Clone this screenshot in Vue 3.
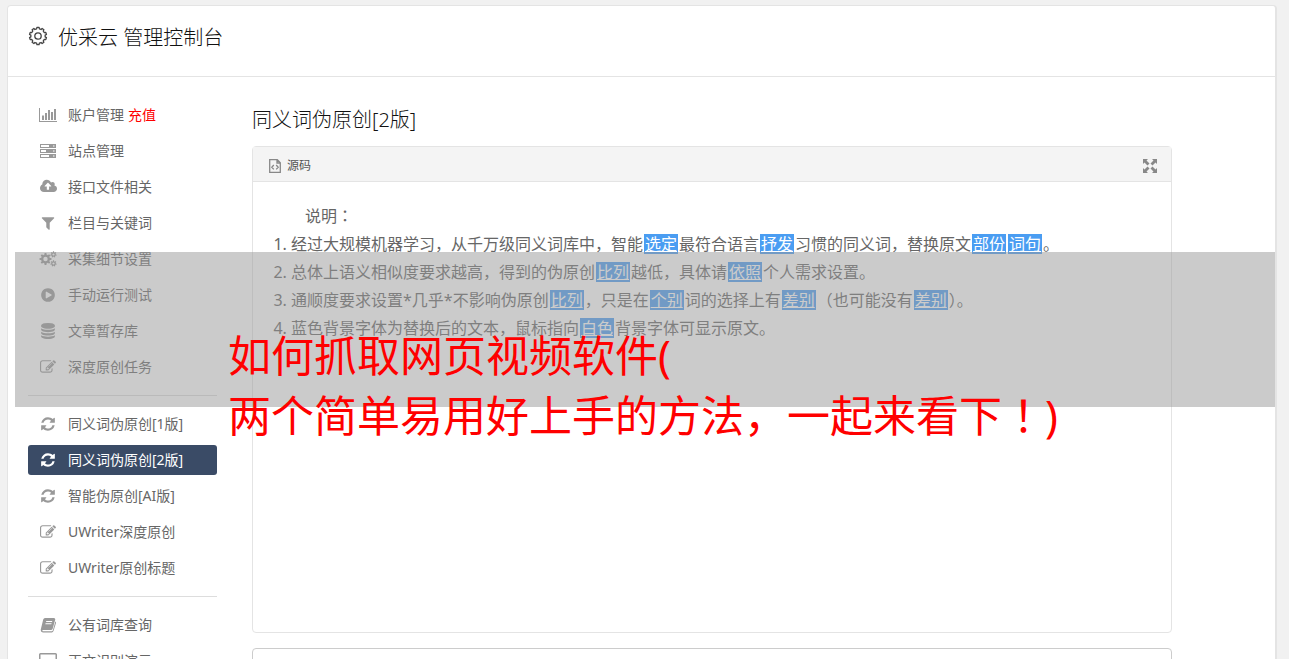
<script setup>
import { h } from 'vue'

const icons = {
  chart: { box: '0 0 18 16', w: 18, d: 'M0 1h1v13h17v1H0zM3 8.500h2V13H3zM6 6h2v7H6zM9 3h2v10H9zM12 5h2v8h-2zM15 2h2v11h-2z' },
  server: { box: '0 0 18 16', w: 18, d: 'M1 1h16v4H1zM2 2v2h8V2zM1 6h16v4H1zM2 7v2h5V7zM1 11h16v4H1zM2 12v2h8v-2zM14 2.500v1h1.500v-1zM14 7.500v1h1.500v-1zM14 12.500v1h1.500v-1z' },
  cloud: { box: '0 64 1920 1792', w: 17, d: 'M1280 864q0-14-9-23l-352-352q-9-9-23-9t-23 9l-351 351q-10 12-10 24 0 14 9 23t23 9h224v352q0 13 9.500 22.500t22.500 9.500h192q13 0 22.500-9.500t9.500-22.500v-352h224q13 0 22.500-9.500t9.500-22.500zm640 288q0 159-112.500 271.500t-271.500 112.500h-1088q-185 0-316.500-131.500t-131.500-316.500q0-130 70-240t188-165q-2-30-2-43 0-212 150-362t362-150q156 0 285.500 87t188.500 231q71-62 166-62 106 0 181 75t75 181q0 76-41 138 130 31 213.500 135.500t83.500 238.500z' },
  filter: { box: '0 0 1792 1792', w: 16, d: 'M1595 295q17 41-14 70l-493 493v742q0 42-39 59-13 5-25 5-27 0-45-19l-256-256q-19-19-19-45v-486l-493-493q-31-29-14-70 17-39 59-39h1280q42 0 59 39z' },
  play: { box: '0 0 1792 1792', w: 16, d: 'M896 128q209 0 385.500 103t279.500 279.500 103 385.500-103 385.500-279.500 279.500-385.500 103-385.500-103-279.500-279.500-103-385.500 103-385.500 279.500-279.500 385.500-103zm384 823q32-18 32-55t-32-55l-544-320q-31-19-64-1-32 19-32 56v640q0 37 32 56 16 8 32 8 17 0 32-9z' },
  database: { box: '0 0 1792 1792', w: 16, d: 'M896 768q237 0 443-43t325-127v170q0 69-103 128t-280 93.500-385 34.500-385-34.500-280-93.500-103-128v-170q119 84 325 127t443 43zm0 768q237 0 443-43t325-127v170q0 69-103 128t-280 93.500-385 34.500-385-34.500-280-93.500-103-128v-170q119 84 325 127t443 43zm0-384q237 0 443-43t325-127v170q0 69-103 128t-280 93.500-385 34.500-385-34.500-280-93.500-103-128v-170q119 84 325 127t443 43zm0-1152q208 0 385 34.500t280 93.500 103 128v128q0 69-103 128t-280 93.500-385 34.500-385-34.500-280-93.500-103-128v-128q0-69 103-128t280-93.500 385-34.500z' },
  edit: { box: '0 0 1792 1792', w: 16, d: 'M888 1184l116-116-152-152-116 116v56h96v96h56zm440-720q-16-16-33 1l-350 350q-17 17-1 33t33-1l350-350q17-17 1-33zm80 594v190q0 119-84.500 203.500t-203.500 84.500h-832q-119 0-203.500-84.500t-84.500-203.500v-832q0-119 84.500-203.500t203.500-84.500h832q63 0 117 25 15 7 18 23 3 17-9 29l-49 49q-14 14-32 8-23-6-45-6h-832q-66 0-113 47t-47 113v832q0 66 47 113t113 47h832q66 0 113-47t47-113v-126q0-13 9-22l64-64q15-15 35-7t20 29zm-96-738l288 288-672 672h-288v-288zm444 132l-92 92-288-288 92-92q28-28 68-28t68 28l152 152q28 28 28 68t-28 68z' },
  refresh: { box: '-128 -128 1792 1792', w: 16, d: 'M1511 928q0 5-1 7-64 268-268 434.500t-478 166.500q-146 0-282.500-55t-243.500-157l-129 129q-19 19-45 19t-45-19-19-45v-448q0-26 19-45t45-19h448q26 0 45 19t19 45-19 45l-137 137q71 66 161 102t187 36q134 0 250-65t186-179q11-17 53-117 8-23 30-23h192q13 0 22.500 9.500t9.500 22.500zm25-800v448q0 26-19 45t-45 19h-448q-26 0-45-19t-19-45 19-45l138-138q-148-137-349-137-134 0-250 65t-186 179q-11 17-53 117-8 23-30 23h-199q-13 0-22.500-9.500t-9.500-22.500v-7q65-268 270-434.500t480-166.500q146 0 284 55.500t245 156.500l130-129q19-19 45-19t45 19 19 45z' },
  book: { box: '0 0 16 16', w: 16, d: 'M5 1h9q1.500.2 1.200 1.700L12.600 12q-.4 1-1.600 1H3q-1 0-.7.7.2.6 1 .6h8.500q.7 0 1-.8L15.400 4.500q1 .5.600 1.500L13.500 14q-.5 1.400-1.700 1.400H3q-2.400-.3-2.300-2.600L3.200 2.600Q3.700 1.100 5 1zM6.300 4l-.3 1h6l.3-1zM5.600 6.300l-.3 1h6l.3-1z' },
  desktop: { box: '0 0 18 16', w: 18, d: 'M1.500 0h15Q18 0 18 1.500v10q0 1.500-1.500 1.500H12l.5 2H14v1H4v-1h1.500L6 13H1.500Q0 13 0 11.500v-10Q0 0 1.500 0zM1.500 1.500v8h15v-8z' }
}

// Closed toothed outline around a centre point
function gear(cx, cy, outer, inner, teeth) {
  const points = []
  for (let i = 0; i < teeth; i++) {
    for (const [offset, radius] of [[-0.3, inner], [-0.2, outer], [0.2, outer], [0.3, inner]]) {
      const a = ((i + offset) / teeth) * Math.PI * 2 - Math.PI / 2
      points.push(`${(cx + radius * Math.cos(a)).toFixed(2)} ${(cy + radius * Math.sin(a)).toFixed(2)}`)
    }
  }
  return 'M' + points.join('L') + 'Z'
}
function hole(cx, cy, r) {
  return `M${cx - r} ${cy}a${r} ${r} 0 1 0 ${2 * r} 0a${r} ${r} 0 1 0 ${-2 * r} 0Z`
}
icons.cogs = {
  box: '0 0 18 16', w: 18,
  d: gear(6.5, 8, 6, 4.5, 8) + hole(6.5, 8, 2.2) + gear(14.5, 3.5, 3.2, 2.3, 7) + hole(14.5, 3.5, 1.1) + gear(14.5, 12.5, 3.2, 2.3, 7) + hole(14.5, 12.5, 1.1)
}
const titleGear = gear(10, 10, 8.6, 7.2, 10)

// Text whose colons and exclamation marks sit in the middle of their cell
const Prose = ({ text }) =>
  text.split(/([：！])/).map((part) => (/^[：！]$/.test(part) ? h('span', { class: 'mid-mark', lang: 'zh-TW' }, part) : part))
Prose.props = ['text']

const groups = [
  [
    { icon: 'chart', text: '账户管理', extra: '充值' },
    { icon: 'server', text: '站点管理' },
    { icon: 'cloud', text: '接口文件相关' },
    { icon: 'filter', text: '栏目与关键词' },
    { icon: 'cogs', text: '采集细节设置' },
    { icon: 'play', text: '手动运行测试' },
    { icon: 'database', text: '文章暂存库' },
    { icon: 'edit', text: '深度原创任务' }
  ],
  [
    { icon: 'refresh', text: '同义词伪原创[1版]' },
    { icon: 'refresh', text: '同义词伪原创[2版]', active: true },
    { icon: 'refresh', text: '智能伪原创[AI版]' },
    { icon: 'edit', text: 'UWriter深度原创' },
    { icon: 'edit', text: 'UWriter原创标题' }
  ],
  [
    { icon: 'book', text: '公有词库查询' },
    { icon: 'desktop', text: '正文识别演示' }
  ]
]

// Odd entries of each line are the replaced words
const notes = [
  ['经过大规模机器学习，从千万级同义词库中，智能', '选定', '最符合语言', '抒发', '习惯的同义词，替换原文', '部份', '', '词句', '。'],
  ['总体上语义相似度要求越高，得到的伪原创', '比列', '越低，具体请', '依照', '个人需求设置。'],
  ['通顺度要求设置*几乎*不影响伪原创', '比列', '，只是在', '个别', '词的选择上有', '差别', '（也可能没有', '差别', '）。'],
  ['蓝色背景字体为替换后的文本，鼠标指向', '白色', '背景字体可显示原文。']
]
</script>

<template>
  <div class="page">
    <div class="card">
      <header class="top">
        <svg class="gear" viewBox="0 0 20 20" aria-hidden="true">
          <path :d="titleGear" /><circle cx="10" cy="10" r="3.200" />
        </svg>
        <h1>优采云 管理控制台</h1>
      </header>
      <div class="body">
        <nav class="side">
          <ul v-for="(group, g) in groups" :key="g">
            <li v-for="item in group" :key="item.text">
              <a href="#" :class="{ active: item.active }">
                <span class="ico">
                  <svg :viewBox="icons[item.icon].box" :width="icons[item.icon].w" height="16" aria-hidden="true">
                    <path :d="icons[item.icon].d" fill-rule="evenodd" />
                  </svg>
                </span>
                <span>{{ item.text }}</span>
                <em v-if="item.extra">{{ item.extra }}</em>
              </a>
            </li>
          </ul>
        </nav>
        <main>
          <h2>同义词伪原创[2版]</h2>
          <section class="editor">
            <div class="bar">
              <button type="button">
                <svg width="12" height="14" viewBox="0 0 12 14" aria-hidden="true">
                  <path d="M.7.700h7.600l3 3v9.600H.7zM8 .700v3.300h3.300M4.800 6L2.800 8.200l2 2.200M7.200 6l2 2.200-2 2.200" />
                </svg>
                源码
              </button>
              <button type="button" aria-label="全屏">
                <svg class="solid" width="14" height="14" viewBox="0 0 14 14" aria-hidden="true">
                  <path d="M0 0h5L3.500 1.500l3 3-2 2-3-3L0 5zM14 0H9l1.500 1.500-3 3 2 2 3-3L14 5zM0 14h5l-1.500-1.500 3-3-2-2-3 3L0 9zM14 14H9l1.500-1.500-3-3 2-2 3 3L14 9z" />
                </svg>
              </button>
            </div>
            <div class="text">
              <p><Prose text="说明：" /></p>
              <ol>
                <li v-for="(note, n) in notes" :key="n">
                  <template v-for="(part, i) in note" :key="i"><u v-if="i % 2">{{ part }}</u><template v-else>{{ part }}</template></template>
                </li>
              </ol>
            </div>
          </section>
          <section class="result"></section>
        </main>
      </div>
    </div>
    <div class="band"></div>
    <div class="caption">如何抓取网页视频软件(<br><Prose text="两个简单易用好上手的方法，一起来看下！)" /></div>
  </div>
</template>

<style>
body { background: #f1f1f1; }
.mid-mark { font-family: "Noto Sans CJK TC", sans-serif; line-height: 1; }
</style>

<style scoped>
* { box-sizing: border-box; }
.page {
  position: relative;
  height: 100vh;
  padding: 5px 12px 0 7px;
  overflow: hidden;
  font-family: "Noto Sans", "Noto Sans CJK SC", sans-serif;
  color: #333;
}
.card {
  background: #fff;
  border: 1px solid #e4e4e4;
  border-right-width: 2px;
  border-radius: 4px;
}
.top {
  display: flex;
  align-items: flex-start;
  gap: 10px;
  height: 71px;
  padding: 20px 20px 0;
  border-bottom: 1px solid #e4e4e4;
}
.gear { width: 20px; height: 20px; fill: none; stroke: #444; stroke-width: 1.3; stroke-linejoin: round; }
h1, h2 { margin: 0; font-size: 20px; font-weight: 300; color: #111; }
h1 { line-height: 24px; }
.body { display: flex; gap: 35px; padding: 23px 103px 0 20px; }
.side { flex: 0 0 189px; }
ul { list-style: none; margin: 0; padding: 0; display: grid; gap: 6px; }
ul + ul { margin-top: 13px; padding-top: 13px; border-top: 1px solid #ddd; }
.side a {
  display: flex;
  align-items: center;
  height: 30px;
  border-radius: 3px;
  font-size: 14px;
  line-height: 20px;
  color: #666;
  text-decoration: none;
  white-space: nowrap;
}
.ico { flex: 0 0 40px; display: flex; justify-content: center; }
.ico svg { fill: #999; }
.side em { margin-left: 4px; font-style: normal; color: #f00; }
.side a.active { background: #3a4b66; color: #fff; }
.active .ico svg { fill: #fff; }
main { flex: 1; min-width: 0; }
h2 { margin: 6px 0 12px; line-height: 28px; }
.editor { border: 1px solid #e4e4e4; border-radius: 4px; min-height: 487px; }
.bar {
  display: flex;
  justify-content: space-between;
  align-items: center;
  height: 35px;
  padding: 3px 14px 0 16px;
  background: #f4f4f4;
  border-bottom: 1px solid #e4e4e4;
}
button {
  display: flex;
  align-items: center;
  gap: 6px;
  padding: 0;
  border: 0;
  background: none;
  font: inherit;
  font-size: 12px;
  line-height: 18px;
  color: #555;
}
button svg { fill: none; stroke: #888; stroke-width: 1.3; }
button svg.solid { fill: #888; stroke: none; }
.text { padding: 20px; font-size: 16px; line-height: 28px; color: #666; white-space: nowrap; }
.text p { margin: 0; padding-left: 32px; }
ol { margin: 0; padding-left: 18px; }
.text u { margin: 0 1px; padding: 0 1px; background: #4a9df2; color: #fff; line-height: 20px; display: inline-block; }
.result { height: 120px; margin-top: 15px; border: 1px solid #ccc; border-radius: 4px; }
.band {
  position: absolute;
  top: 252px;
  left: 15px;
  right: 14px;
  height: 155px;
  background: rgba(151, 151, 151, 0.5);
}
.caption {
  position: absolute;
  top: 326px;
  left: 228px;
  font-size: 43px;
  line-height: 60px;
  color: #f00;
  white-space: nowrap;
}
</style>
